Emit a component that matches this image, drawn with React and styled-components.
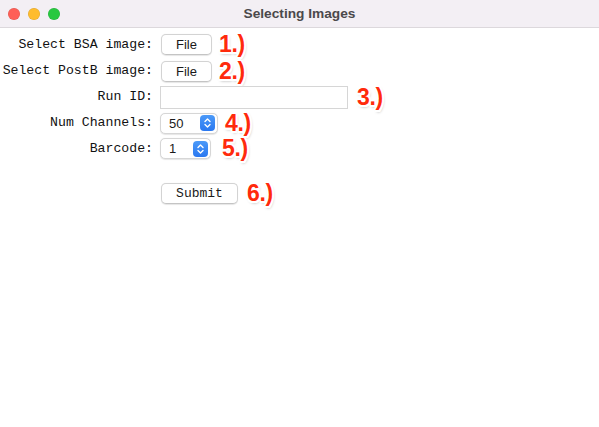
import React from "react";
import styled, { createGlobalStyle } from "styled-components";

const Global = createGlobalStyle`
  html, body { margin: 0; padding: 0; background: #ffffff; }
  body { width: 599px; height: 427px; overflow: hidden; }
`;

const Window = styled.div`
  width: 599px;
  height: 427px;
  display: flex;
  flex-direction: column;
  background: #ffffff;
  overflow: hidden;
`;

const TitleBar = styled.div`
  height: 27px;
  flex: none;
  position: relative;
  display: flex;
  align-items: center;
  justify-content: center;
  background: #f3eff4;
  border-bottom: 1px solid #dcd8dc;
`;

const Lights = styled.div`
  position: absolute;
  left: 8px;
  top: 8px;
  display: flex;
  gap: 8px;
`;

const Light = styled.span`
  width: 12px;
  height: 12px;
  border-radius: 50%;
  background: ${(p) => p.$c};
  box-shadow: inset 0 0 0 0.5px rgba(0, 0, 0, 0.12);
`;

const Title = styled.div`
  font-family: "Liberation Sans", Arial, sans-serif;
  font-weight: bold;
  font-size: 13.7px;
  color: #4b494b;
`;

const Form = styled.div`
  display: grid;
  grid-template-columns: 153px auto;
  column-gap: 7px;
  padding-top: 3px;
  align-items: center;
`;

const Label = styled.div`
  font-family: "Liberation Mono", "Courier New", monospace;
  font-size: 13.2px;
  color: #111111;
  text-align: right;
  white-space: nowrap;
  height: ${(p) => p.$h}px;
  line-height: ${(p) => p.$h}px;
`;

const Cell = styled.div`
  display: flex;
  align-items: center;
  height: ${(p) => p.$h}px;
`;

const PushButton = styled.button`
  box-sizing: border-box;
  margin: 0 0 0 1px;
  padding: 0;
  width: ${(p) => p.$w}px;
  height: 21px;
  background: #ffffff;
  border: 1px solid #d3d3d3;
  border-bottom-color: #c4c4c4;
  border-radius: 5px;
  box-shadow: 0 0.5px 1px rgba(0, 0, 0, 0.1);
  font-family: ${(p) =>
    p.$mono
      ? `"Liberation Mono", "Courier New", monospace`
      : `"Liberation Sans", Arial, sans-serif`};
  font-size: 13px;
  color: #1a1a1a;
  cursor: default;
`;

const Entry = styled.input`
  box-sizing: border-box;
  width: 188px;
  height: 23px;
  margin: 0;
  padding: 0 4px;
  border: 1px solid #d6d6d6;
  border-radius: 0;
  background: #ffffff;
  outline: none;
`;

const Select = styled.div`
  box-sizing: border-box;
  width: ${(p) => p.$w}px;
  height: 21px;
  display: flex;
  align-items: center;
  justify-content: space-between;
  padding: 0 2px 0 8px;
  background: #ffffff;
  border: 1px solid #d6d6d6;
  border-radius: 5px;
  box-shadow: 0 0.5px 1px rgba(0, 0, 0, 0.1);
  font-family: "Liberation Sans", Arial, sans-serif;
  font-size: 13px;
  color: #1a1a1a;
`;

const Chevron = styled.span`
  width: 15px;
  height: 16px;
  border-radius: 4px;
  background: linear-gradient(#4c9af8, #2a78f0);
  display: flex;
  align-items: center;
  justify-content: center;
`;

const Note = styled.span`
  margin-left: ${(p) => p.$ml}px;
  font-family: "Liberation Sans", Arial, sans-serif;
  font-weight: bold;
  font-size: 23px;
  line-height: 1;
  color: #ff2a0c;
  letter-spacing: -0.3px;
  text-shadow: 2px 0 0 #fff, -2px 0 0 #fff, 0 2px 0 #fff, 0 -2px 0 #fff,
    1.5px 1.5px 0 #fff, -1.5px 1.5px 0 #fff, 1.5px -1.5px 0 #fff,
    -1.5px -1.5px 0 #fff, 1px 2px 3px rgba(0, 0, 0, 0.35);
`;

const ChevronIcon = () => (
  <svg width="9" height="12" viewBox="0 0 9 12">
    <path
      d="M2 4.5 L4.5 2 L7 4.5 M2 7.5 L4.5 10 L7 7.5"
      fill="none"
      stroke="#ffffff"
      strokeWidth="1.4"
      strokeLinecap="round"
      strokeLinejoin="round"
    />
  </svg>
);

const rows = [
  { label: "Select BSA image:", h: 27, kind: "file", note: "1.)", ml: 7 },
  { label: "Select PostB image:", h: 26, kind: "file", note: "2.)", ml: 7 },
  { label: "Run ID:", h: 26, kind: "entry", note: "3.)", ml: 9 },
  { label: "Num Channels:", h: 26, kind: "select", value: "50", w: 58, note: "4.)", ml: 7 },
  { label: "Barcode:", h: 25, kind: "select", value: "1", w: 51, note: "5.)", ml: 11 },
  { label: "", h: 19, kind: "blank" },
  { label: "", h: 27, kind: "submit", note: "6.)", ml: 9 },
];

export default function App() {
  return (
    <>
      <Global />
      <Window>
        <TitleBar>
          <Lights>
            <Light $c="#fe5f57" />
            <Light $c="#febc2e" />
            <Light $c="#28c840" />
          </Lights>
          <Title>Selecting Images</Title>
        </TitleBar>
        <Form>
          {rows.map((r, i) => (
            <React.Fragment key={i}>
              <Label $h={r.h}>{r.label}</Label>
              <Cell $h={r.h}>
                {r.kind === "file" && <PushButton $w={51}>File</PushButton>}
                {r.kind === "entry" && <Entry />}
                {r.kind === "select" && (
                  <Select $w={r.w}>
                    <span>{r.value}</span>
                    <Chevron>
                      <ChevronIcon />
                    </Chevron>
                  </Select>
                )}
                {r.kind === "submit" && (
                  <PushButton $w={77} $mono>
                    Submit
                  </PushButton>
                )}
                {r.note && <Note $ml={r.ml}>{r.note}</Note>}
              </Cell>
            </React.Fragment>
          ))}
        </Form>
      </Window>
    </>
  );
}
